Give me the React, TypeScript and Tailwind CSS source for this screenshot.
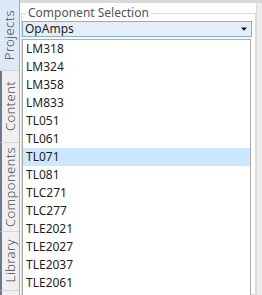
import React from 'react';

const parts = [
  'LM318', 'LM324', 'LM358', 'LM833', 'TL051', 'TL061', 'TL071',
  'TL081', 'TLC271', 'TLC277', 'TLE2021', 'TLE2027', 'TLE2037', 'TLE2061',
];

const tabs = [
  { label: 'Projects', h: 'h-[71px]', active: true },
  { label: 'Content', h: 'h-[72px]', active: false },
  { label: 'Components', h: 'h-[89px]', active: false },
  { label: 'Library', h: 'h-[59px]', active: false },
  { label: '', h: 'h-[20px]', active: false },
];

export default function App() {
  const selected = 'TL071';

  return (
    <div
      className="flex w-[262px] h-[295px] overflow-hidden bg-[#f0f0f0] text-[12px]"
      style={{ fontFamily: '"Noto Sans", "Liberation Sans", sans-serif' }}
    >
      {/* side tabs */}
      <div className="flex flex-col w-[20px] shrink-0 border-r border-[#a9a9a9]">
        {tabs.map((t, i) => (
          <div
            key={i}
            className={
              'flex items-center justify-center shrink-0 border-b border-[#d4d4d4] ' +
              t.h +
              (t.active
                ? ' bg-[#dde9f6]'
                : ' bg-[#f0f0f0] border-l-2 border-l-[#6b7a8a]')
            }
          >
            <span className="[writing-mode:vertical-rl] rotate-180 text-[13px] font-light tracking-[0.4px] text-[#4a4a4a] leading-none">
              {t.label}
            </span>
          </div>
        ))}
      </div>

      {/* content */}
      <div className="flex flex-col flex-1 min-w-0">
        <div className="h-[3px] bg-[#d9d9d9] shrink-0" />
        <div className="flex flex-1 min-h-0">
          <div className="flex-1 bg-white pl-[1px] pt-[3px]">
            <fieldset className="h-full border border-[#dcdcdc] pr-[3px] pb-0 m-0 min-w-0">
              <legend className="ml-[4px] px-[2px] text-[#555] leading-[14px]">
                Component Selection
              </legend>
              <div className="flex items-center justify-between h-[16px] mt-[1px] border border-[#7eb0e0] bg-[#e5eef8] pl-[2px] pr-[4px] text-[#1e1e1e]">
                <span className="leading-none">OpAmps</span>
                <svg width="6" height="4" viewBox="0 0 6 4">
                  <path d="M0 0.5 H6 L3 3.8 Z" fill="#111" />
                </svg>
              </div>
              <div className="mt-[2px] mr-[1px] border border-[#acacac] bg-white h-[300px]">
                {parts.map((p) => (
                  <div
                    key={p}
                    className={
                      'h-[18px] flex items-center pl-[3px] text-[#1e1e1e] ' +
                      (p === selected ? 'bg-[#cce8ff]' : '')
                    }
                  >
                    {p}
                  </div>
                ))}
              </div>
            </fieldset>
          </div>
          <div className="w-[6px] shrink-0 bg-[#eeeeee] border-l border-[#dadada]" />
        </div>
      </div>
    </div>
  );
}
